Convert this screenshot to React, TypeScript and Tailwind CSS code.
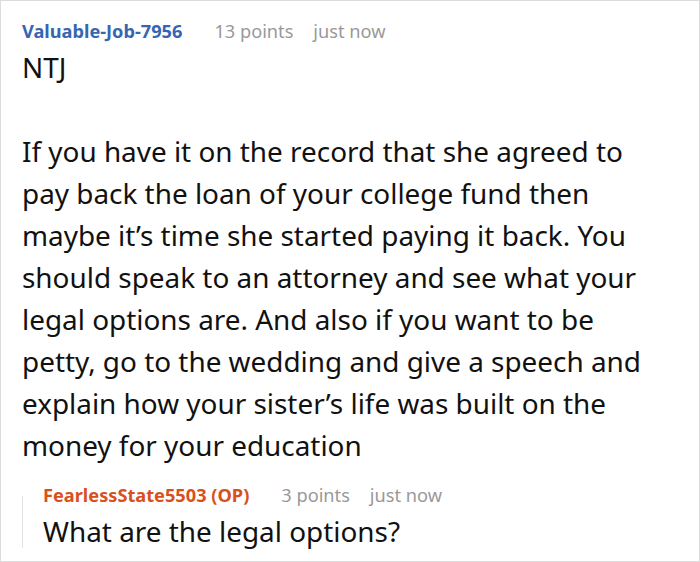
const body =
  'If you have it on the record that she agreed to pay back the loan of your college fund then maybe it\u2019s time she started paying it back. You should speak to an attorney and see what your legal options are. And also if you want to be petty, go to the wedding and give a speech and explain how your sister\u2019s life was built on the money for your education'

function Meta({ points }: { points: string }) {
  return (
    <>
      <span className="ml-8 text-[#999]">{points}</span>
      <span className="ml-5 text-[#999]">just now</span>
    </>
  )
}

export default function App() {
  return (
    <div
      className="w-[700px] h-[562px] bg-white border border-[#dcdcdc] pl-[21px] pr-[30px] pt-[17px] text-[#111]"
      style={{ fontFamily: '"Noto Sans", "Open Sans", sans-serif' }}
    >
      <div className="flex items-baseline text-[18.2px] leading-[26px]">
        <span className="font-bold text-[#3666b2]">Valuable-Job-7956</span>
        <Meta points="13 points" />
      </div>
      <div className="mt-[2px] text-[27.9px] leading-[42px]">
        <p>NTJ</p>
        <p className="mt-[42px]">{body}</p>
      </div>
      <div className="mt-[16px] flex">
        <div className="w-px bg-[#e3e3e3] mt-[14px] mb-[4px]" />
        <div className="pl-5">
          <div className="flex items-baseline text-[18.2px] leading-[26px]">
            <span className="font-bold text-[#d9501c]">FearlessState5503 (OP)</span>
            <Meta points="3 points" />
          </div>
          <p className="mt-[2px] text-[27.9px] leading-[42px]">What are the legal options?</p>
        </div>
      </div>
    </div>
  )
}
